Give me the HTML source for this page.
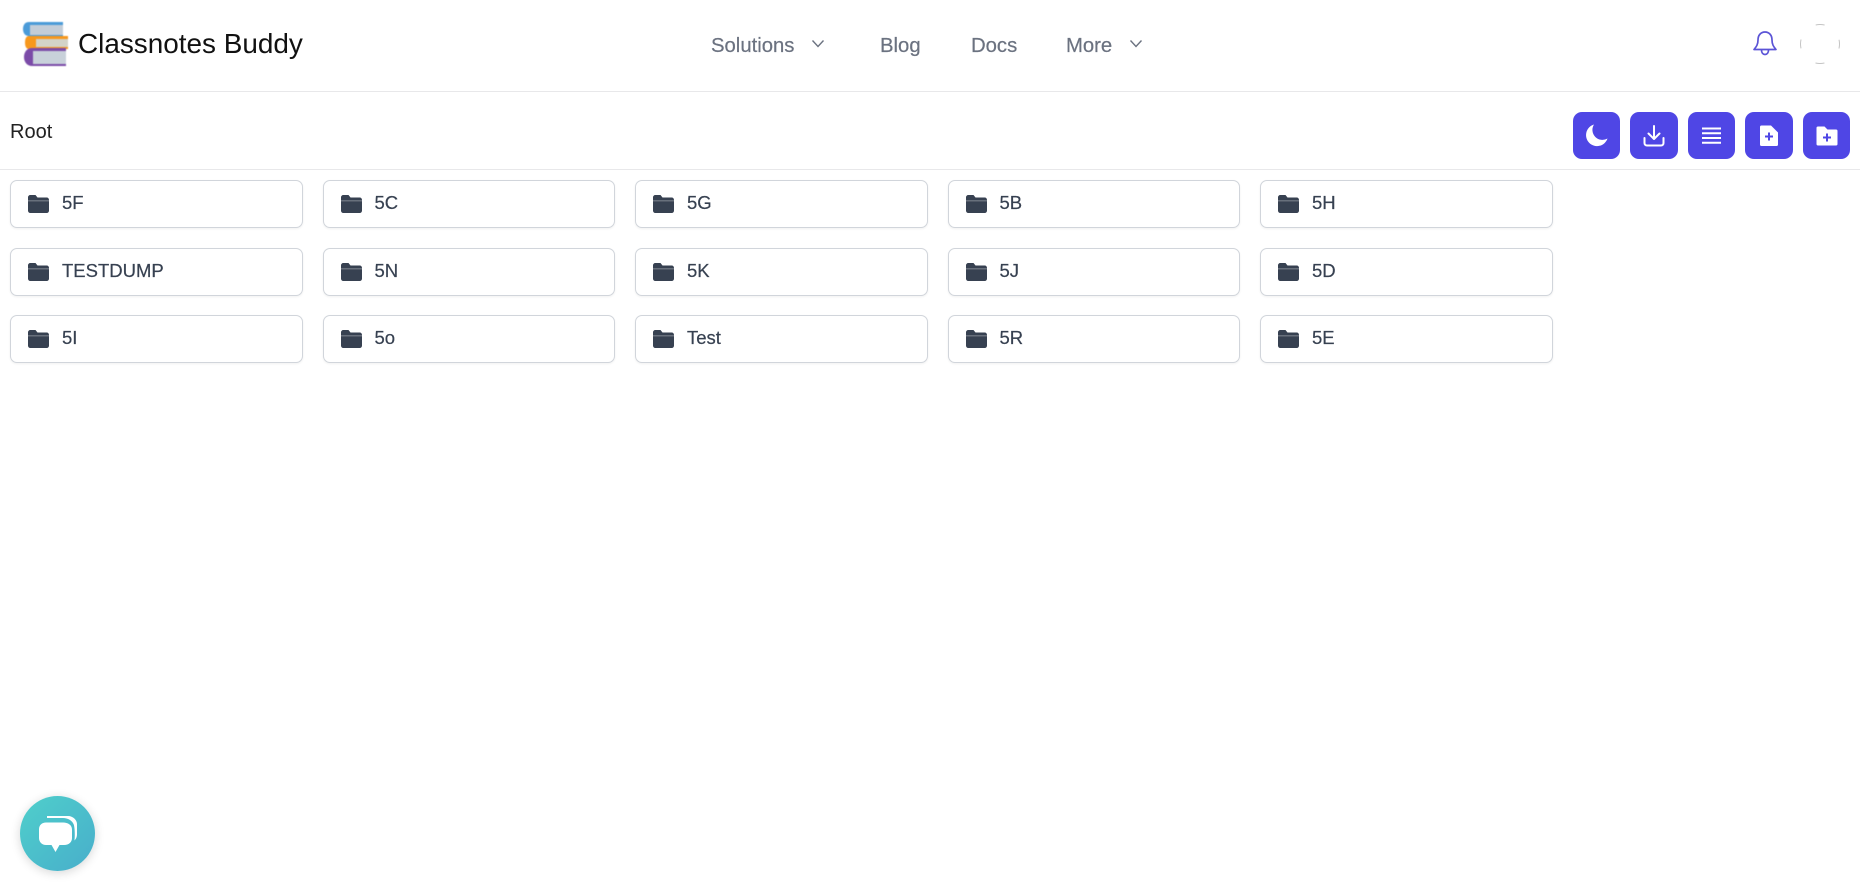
<!DOCTYPE html>
<html lang="en"><head><meta charset="utf-8"><title>Classnotes Buddy</title>
<style>
*{box-sizing:border-box}
html,body{margin:0;padding:0;width:1860px;height:887px;overflow:hidden;background:#fff;font-family:"Liberation Sans",sans-serif}
.a{position:absolute}
.t{position:absolute;white-space:nowrap;line-height:24px}
.nav{font-size:20.3px;color:#6b7280;top:34px;-webkit-text-stroke:.2px #6b7280}
.btn{position:absolute;top:112px;height:47px;background:#4f46e5;border-radius:9px}
.btn svg{position:absolute;left:0;top:0}
.card{position:absolute;width:292.5px;height:48px;border:1px solid #d1d5db;border-radius:7px;background:#fff;box-shadow:0 1px 2px rgba(0,0,0,.06);color:#374151;font-size:18.5px}
.card svg{position:absolute;left:17px;top:14px}
.card span{position:absolute;left:51px;top:10px;line-height:24px;-webkit-text-stroke:.2px #374151}
</style></head><body>
<div class="a" style="left:0;top:91px;width:1860px;height:1px;background:#e8e8ea"></div>
<div class="a" style="left:0;top:169px;width:1860px;height:1px;background:#e8e8ea"></div>

<svg class="a" style="left:22px;top:20px;filter:blur(.4px)" width="46" height="48" viewBox="0 0 46 48">
<path d="M7 2H41V16H7C3 16 1 13 1 9S3 2 7 2Z" fill="#4b9bd8"/><rect x="8" y="5" width="33" height="10" fill="#c3cdd8"/>
<path d="M7 16H46V29H7C4 29 3 26 3 22.5S4 16 7 16Z" fill="#f7981d"/><rect x="14" y="19" width="32" height="8" fill="#d3d3c8"/>
<path d="M10 28H44V46H10C5 46 2 42 2 37S5 28 10 28Z" fill="#7b4ba8"/><rect x="11" y="31" width="33" height="13" fill="#c8d1da"/>
</svg>
<div class="t" style="left:78px;top:29px;font-size:27.9px;line-height:30px;color:#111">Classnotes Buddy</div>

<div class="t nav" style="left:711px">Solutions</div>
<svg class="a" style="left:810px;top:38px" width="16" height="12" viewBox="0 0 16 12"><path d="M2.5 2.5L8 8.5L13.5 2.5" fill="none" stroke="#6b7280" stroke-width="1.4"/></svg>
<div class="t nav" style="left:880px">Blog</div>
<div class="t nav" style="left:971px">Docs</div>
<div class="t nav" style="left:1066px">More</div>
<svg class="a" style="left:1128px;top:38px" width="16" height="12" viewBox="0 0 16 12"><path d="M2.5 2.5L8 8.5L13.5 2.5" fill="none" stroke="#6b7280" stroke-width="1.4"/></svg>

<svg class="a" style="left:1752px;top:29px" width="26" height="28" viewBox="0 0 26 28" fill="none" stroke="#5b54d6" stroke-width="1.7" stroke-linejoin="round"><path d="M6 11C6 6 9 3 13 3S20 6 20 11C20 16 22 18 24 20.5H2C4 18 6 16 6 11Z"/><path d="M9.5 21C9.5 24 11 25.5 13 25.5S16.5 24 16.5 21"/></svg>
<svg class="a" style="left:1799px;top:23px" width="42" height="42" viewBox="0 0 42 42"><circle cx="21" cy="21" r="19.5" fill="none" stroke="#c4c4c4" stroke-width="1" stroke-dasharray="9 21.63" stroke-dashoffset="4.5"/></svg>

<div class="t" style="left:10px;top:120px;font-size:20px;color:#222">Root</div>

<div class="btn" style="left:1573px;width:47px"><svg width="47" height="47" viewBox="0 0 47 47"><path d="M21 12.5A11 11 0 1 0 34.5 26.5A10 10 0 0 1 21 12.5Z" fill="#fff"/></svg></div>
<div class="btn" style="left:1630px;width:48px"><svg width="48" height="47" viewBox="0 0 48 47" fill="none" stroke="#fff" stroke-width="2" stroke-linecap="round" stroke-linejoin="round"><path d="M24 14V27M18.5 21.5L24 27L29.5 21.5"/><path d="M14.500 26V31C14.500 32.500 15.500 33.500 17 33.500H31C32.500 33.500 33.500 32.500 33.500 31V26"/></svg></div>
<div class="btn" style="left:1688px;width:47px"><svg width="47" height="47" viewBox="0 0 47 47" stroke="#fff" stroke-width="2"><path d="M14 16.5H33M14 21.3H33M14 26H33M14 30.8H33"/></svg></div>
<div class="btn" style="left:1745px;width:48px"><svg width="48" height="47" viewBox="0 0 48 47"><path d="M15 15C15 14 15.5 13.5 16.5 13.5H26L33 20.5V32.5C33 33.5 32.5 34 31.5 34H16.5C15.5 34 15 33.5 15 32.5Z" fill="#fff"/><path d="M24 20.5V28.5M20 24.5H28" stroke="#4f46e5" stroke-width="2"/></svg></div>
<div class="btn" style="left:1803px;width:47px"><svg width="47" height="47" viewBox="0 0 47 47"><path d="M13.5 16C13.5 15 14 14.5 15 14.5H21.5L24.5 17.5H33C34 17.5 34.5 18 34.5 19V32C34.500 33 34 33.5 33 33.5H15C14 33.5 13.5 33 13.5 32Z" fill="#fff"/><path d="M24 21.5V29.5M20 25.5H28" stroke="#4f46e5" stroke-width="2"/></svg></div>

<svg width="0" height="0" style="position:absolute"><defs><symbol id="f" viewBox="0 0 21 18"><path d="M0 2.5C0 1 1 0 2.5 0H7.5L9.500 2.5H18.5C20 2.5 21 3.5 21 5V5.800H0Z" fill="#374151"/><path d="M0 6.100H21V15.5C21 17 20 18 18.5 18H2.5C1 18 0 17 0 15.5Z" fill="#374151"/></symbol></defs></svg>

<div class="card" style="left:10px;top:180px"><svg width="21" height="18"><use href="#f"/></svg><span>5F</span></div>
<div class="card" style="left:322.5px;top:180px"><svg width="21" height="18"><use href="#f"/></svg><span>5C</span></div>
<div class="card" style="left:635px;top:180px"><svg width="21" height="18"><use href="#f"/></svg><span>5G</span></div>
<div class="card" style="left:947.5px;top:180px"><svg width="21" height="18"><use href="#f"/></svg><span>5B</span></div>
<div class="card" style="left:1260px;top:180px"><svg width="21" height="18"><use href="#f"/></svg><span>5H</span></div>

<div class="card" style="left:10px;top:248px"><svg width="21" height="18"><use href="#f"/></svg><span>TESTDUMP</span></div>
<div class="card" style="left:322.5px;top:248px"><svg width="21" height="18"><use href="#f"/></svg><span>5N</span></div>
<div class="card" style="left:635px;top:248px"><svg width="21" height="18"><use href="#f"/></svg><span>5K</span></div>
<div class="card" style="left:947.5px;top:248px"><svg width="21" height="18"><use href="#f"/></svg><span>5J</span></div>
<div class="card" style="left:1260px;top:248px"><svg width="21" height="18"><use href="#f"/></svg><span>5D</span></div>

<div class="card" style="left:10px;top:315px"><svg width="21" height="18"><use href="#f"/></svg><span>5I</span></div>
<div class="card" style="left:322.5px;top:315px"><svg width="21" height="18"><use href="#f"/></svg><span>5o</span></div>
<div class="card" style="left:635px;top:315px"><svg width="21" height="18"><use href="#f"/></svg><span>Test</span></div>
<div class="card" style="left:947.5px;top:315px"><svg width="21" height="18"><use href="#f"/></svg><span>5R</span></div>
<div class="card" style="left:1260px;top:315px"><svg width="21" height="18"><use href="#f"/></svg><span>5E</span></div>

<div class="a" style="left:20px;top:796px;width:75px;height:75px;border-radius:50%;background:linear-gradient(135deg,#4fcfcb,#48aecb);box-shadow:0 2px 10px rgba(0,0,0,.16)"></div>
<svg class="a" style="left:36px;top:813px" width="44" height="42" viewBox="0 0 44 42"><path d="M11 3H32C37 3 41 7 41 11V21C41 24 40 26 38.5 27.5C39 24 39 14 37.5 11C36 7.5 32 5 27 5H11Z" fill="#fff"/><path d="M10 9.500H27C32 9.500 36 12 36 16.500V25C36 29 33 32 28 32H23.500L19.500 39L15.500 32H10C6 32 3 29 3 25V16.500C3 12 6 9.500 10 9.500Z" fill="#fff"/></svg>
</body></html>
